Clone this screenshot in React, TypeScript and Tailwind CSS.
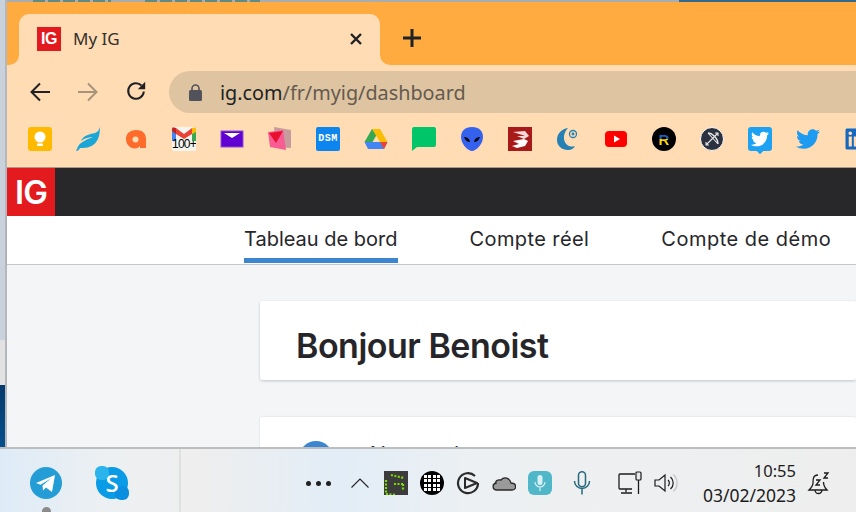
import React from 'react';
import { FaTwitter, FaLinkedin } from 'react-icons/fa';

const Keep = () => (
    <div className="w-6 h-6 rounded-[3px] bg-[#ffba00] flex items-center justify-center">
        <svg width="16" height="18" viewBox="0 0 16 18">
            <circle cx="8" cy="7" r="5.5" fill="#fff" />
            <rect x="5" y="13.5" width="6" height="2.5" rx="0.5" fill="#fff" />
        </svg>
    </div>
);

const Leaf = () => (
    <svg width="24" height="24" viewBox="0 0 24 24">
        <path d="M24 0c-1 3-2 5-5 6-6 1-12 3-14 8 4-3 8-4 12-4-3 1-8 3-12 6-3 2-4 6-5 8 2 0 3-1 4-3 4 0 9 0 13-3 5-3 7-10 7-18z" fill="#1ba6d8" />
    </svg>
);

const OrangeA = () => (
    <svg width="24" height="24" viewBox="0 0 24 24">
        <path fillRule="evenodd" d="M12 3c6 0 10 3 10 9v9h-6v-2c-1 1.500-3 2.500-5 2.500-5 0-9-4-9-9.500s4-9 10-9zm-.500 6.500a3 3 0 1 0 0 6 3 3 0 0 0 0-6z" fill="#ff6b2b" />
    </svg>
);

const Gmail = () => (
    <div className="w-6 h-6 relative bg-[#f4f5ef] rounded-[2px] overflow-hidden">
        <svg className="absolute left-0 top-0" width="24" height="14" viewBox="0 0 24 14">
            <path d="M0 4 L4 1 V14 H0z" fill="#4285f4" />
            <path d="M24 4 L20 1 V14 H24z" fill="#34a853" />
            <path d="M4 1 L12 7 L20 1 V7 L12 12 L4 7z" fill="#ea4335" />
            <path d="M20 1 L24 0 V5 L20 7z" fill="#fbbc04" />
            <path d="M0 0 L4 1 V7 L0 4z" fill="#c5221f" />
        </svg>
        <span className="absolute left-0 right-0 top-[10px] text-center text-[12px] leading-[14px] tracking-[-0.8px] text-black font-['Liberation_Sans',sans-serif]">100+</span>
    </div>
);

const YahooMail = () => (
    <svg width="24" height="24" viewBox="0 0 24 24">
        <rect x="0" y="4" width="22" height="16" transform="translate(1 0)" fill="#6001d2" stroke="#8a4fd8" strokeWidth="1" />
        <path d="M4 6 H20 L12 11z" fill="#fff" />
    </svg>
);

const Pages = () => (
    <svg width="24" height="24" viewBox="0 0 24 24">
        <path d="M6 0 L23 3 V21 L8 20z" fill="#c79c9c" />
        <path d="M0 5 L15 3 L18 23 L2 20z" fill="#f75d93" />
        <path d="M1 6 L15 4 L8 16z" fill="#e8102e" />
    </svg>
);

const Dsm = () => (
    <div className="w-6 h-6 rounded-[2px] bg-[#0d85ee] flex items-center justify-center">
        <span className="text-[10px] leading-none font-bold text-white tracking-[0.5px] font-['Liberation_Mono',monospace]">DSM</span>
    </div>
);

const Drive = () => (
    <svg width="24" height="24" viewBox="0 0 24 22">
        <path d="M8 1 H16 L8.500 14 H0.500z" fill="#34a853" />
        <path d="M8 1 H16 L23.500 14 H16z" fill="#fbbc04" />
        <path d="M0.500 14 H8.500 L23.500 14 L20 21 H4z" fill="#4285f4" />
        <path d="M16 14 H23.500 L20 21z" fill="#ea4335" />
    </svg>
);

const Chat = () => (
    <svg width="24" height="24" viewBox="0 0 24 24">
        <path d="M2 0 H22 a2 2 0 0 1 2 2 V18 a2 2 0 0 1 -2 2 H5 L0 24 V2 a2 2 0 0 1 2 -2z" fill="#00c569" />
    </svg>
);

const Alien = () => (
    <svg width="24" height="24" viewBox="0 0 24 24">
        <path d="M12 0 C5 0 1 4 1 10 C1 17 8 24 12 24 C16 24 23 17 23 10 C23 4 19 0 12 0z" fill="#3561ef" />
        <path d="M4 10 C7 10 10 12 10 15 C7 15 5 13 4 10z" fill="#0a0a14" />
        <path d="M20 10 C17 10 14 12 14 15 C17 15 19 13 20 10z" fill="#0a0a14" />
    </svg>
);

const RedDragon = () => (
    <svg width="24" height="24" viewBox="0 0 24 24">
        <rect width="24" height="24" fill="#a81a1a" />
        <path d="M5 5 L17 4 L21 9 L16 12 L9 9 L17 9z" fill="#f5dada" />
        <path d="M5 14 L16 12 L20 14 L17 19 L9 21 L4 19 L11 17z" fill="#fff" />
    </svg>
);

const Crescent = () => (
    <svg width="24" height="24" viewBox="0 0 24 24">
        <path d="M12 1 C5 2 1 7 1 13 C1 19 6 23 12 23 C16 23 18 21 19 19 C14 21 9 18 8 12 C7.500 8 9 4 12 1z" fill="#2480b5" />
        <circle cx="17" cy="7" r="3.500" fill="none" stroke="#2480b5" strokeWidth="1.300" />
        <circle cx="17" cy="7" r="1.400" fill="#2480b5" />
    </svg>
);

const Youtube = () => (
    <svg width="24" height="24" viewBox="0 0 24 24">
        <rect x="1" y="4" width="22" height="16" rx="4" fill="#f00" />
        <path d="M10 8.500 L16 12 L10 15.500z" fill="#fff" />
    </svg>
);

const RCircle = () => (
    <div className="w-6 h-6 rounded-full bg-black flex items-center justify-center">
        <span className="text-[15px] leading-none font-bold bg-[linear-gradient(#1c5fc4_50%,#ffd400_50%)] bg-clip-text text-transparent font-['Liberation_Sans',sans-serif]">R</span>
    </div>
);

const Bow = () => (
    <svg width="24" height="24" viewBox="0 0 24 24">
        <circle cx="12" cy="12" r="11.500" fill="#2c3140" stroke="#fff" strokeWidth="1" />
        <path d="M8 6 C12 6 18 11 18 17" fill="none" stroke="#e6e6e6" strokeWidth="1.300" />
        <path d="M8 6 L18 17 M6 18 L18 6 M15 6 H18 V9 M6 15 V18 H9" fill="none" stroke="#e6e6e6" strokeWidth="1.100" />
    </svg>
);

const TwitterBubble = () => (
    <div className="w-6 h-6 relative rounded-[3px] bg-[#1da1f2] flex items-center justify-center">
        <FaTwitter className="text-white" size={18} />
        <div className="absolute -bottom-[2px] left-[9px] w-[6px] h-[6px] rotate-45 bg-[#1da1f2]" />
    </div>
);

const TwitterBird = () => <FaTwitter className="text-[#1d9bf0]" size={24} />;

const bookmarks = [Keep, Leaf, OrangeA, Gmail, YahooMail, Pages, Dsm, Drive, Chat, Alien, RedDragon, Crescent, Youtube, RCircle, Bow, TwitterBubble, TwitterBird];

const Tray = ({ className, children }: { className: string; children: React.ReactNode }) => (
    <div className={`flex items-center justify-center shrink-0 ${className}`}>{children}</div>
);

const App = () => {
    return (
        <div className="w-[856px] h-[512px] overflow-hidden flex flex-col bg-white font-['Noto_Sans',sans-serif]">
            <div className="flex-1 min-h-0 flex">
                {/* desktop behind the window */}
                <div className="w-[7px] shrink-0 flex">
                    <div className="w-[5px] flex flex-col">
                        <div className="h-[340px] bg-[#c9d2dc]" />
                        <div className="h-[45px] bg-[#e2e2e2]" />
                        <div className="flex-1 bg-[linear-gradient(#063a6c,#064f8c)]" />
                    </div>
                    <div className="w-[2px] bg-[#b4b8bd]" />
                </div>

                <div className="flex-1 min-w-0 flex flex-col">
                    {/* bits of the window behind, along the top edge */}
                    <div className="h-[2px] flex bg-[#a9adb0]">
                        <div className="ml-[26px] w-[78px] bg-[repeating-linear-gradient(90deg,#5f8a88_0_12px,#a9adb0_12px_15px)]" />
                        <div className="ml-[34px] w-[115px] bg-[repeating-linear-gradient(90deg,#5f8a88_0_12px,#a9adb0_12px_15px)]" />
                        <div className="ml-auto w-[177px] bg-[#35698c]" />
                    </div>

                    {/* tab strip */}
                    <div className="h-[63px] bg-[#ffab40] flex items-end pl-3">
                        <div className="relative w-[361px] h-[51px] bg-[#ffdcb3] rounded-t-[10px] flex items-start pl-[18px] pr-[17px] pt-[13px]">
                            <div className="absolute -left-3 bottom-0 w-3 h-3 bg-[#ffdcb3]">
                                <div className="w-3 h-3 bg-[#ffab40] rounded-br-[10px]" />
                            </div>
                            <div className="absolute -right-3 bottom-0 w-3 h-3 bg-[#ffdcb3]">
                                <div className="w-3 h-3 bg-[#ffab40] rounded-bl-[10px]" />
                            </div>
                            <div className="w-6 h-6 bg-[#e2191f] flex items-center justify-center">
                                <span className="text-white text-[16px] leading-none font-bold tracking-[-0.5px] font-['Liberation_Sans',sans-serif]">IG</span>
                            </div>
                            <span className="ml-3 text-[17px] leading-6 text-[#33302c]">My IG</span>
                            <svg className="ml-auto mt-[5px]" width="14" height="14" viewBox="0 0 14 14">
                                <path d="M2 2 L12 12 M12 2 L2 12" stroke="#202124" strokeWidth="2.400" />
                            </svg>
                        </div>
                        <svg className="ml-[23px] mb-[18px]" width="18" height="18" viewBox="0 0 18 18">
                            <path d="M9 0 V18 M0 9 H18" stroke="#202124" strokeWidth="3" />
                        </svg>
                    </div>

                    {/* toolbar */}
                    <div className="h-[48px] bg-[#ffdcb3] flex items-start pt-[6px]">
                        <div className="w-[162px] h-[42px] shrink-0 flex items-center pl-[23px]">
                            <svg width="20" height="20" viewBox="0 0 20 20">
                                <path d="M20 10 H1.500 M10 1.500 L1.500 10 L10 18.500" fill="none" stroke="#202124" strokeWidth="2" />
                            </svg>
                            <svg className="ml-[28px]" width="20" height="20" viewBox="0 0 20 20">
                                <path d="M0 10 H18.500 M10 1.500 L18.500 10 L10 18.500" fill="none" stroke="#a6937b" strokeWidth="2" />
                            </svg>
                            <svg className="ml-[27px] -mt-[2px]" width="22" height="22" viewBox="0 0 24 24">
                                <path d="M20.500 12.500 A8.500 8.500 0 1 1 18 6" fill="none" stroke="#202124" strokeWidth="2.200" />
                                <path d="M22 2 V10 H14z" fill="#202124" />
                            </svg>
                        </div>
                        <div className="flex-1 h-[42px] bg-[#dec4a0] rounded-l-[21px] flex items-center pl-[20px]">
                            <svg width="13" height="17" viewBox="0 0 13 17">
                                <path d="M3 7 V4.500 a3.500 3.500 0 0 1 7 0 V7" fill="none" stroke="#52525a" strokeWidth="1.600" />
                                <rect y="6" width="13" height="11" rx="1.500" fill="#52525a" />
                            </svg>
                            <span className="ml-[18px] pt-[2px] text-[19.8px] leading-none text-[#202124]">
                                ig.com<span className="text-[#645a50]">/fr/myig/dashboard</span>
                            </span>
                        </div>
                    </div>

                    {/* bookmarks */}
                    <div className="h-[55px] bg-[#ffdcb3] border-b border-[#a89a88] flex items-start gap-6 pl-[21px] pt-[14px]">
                        {bookmarks.map((Icon, i) => (
                            <div key={i} className="w-6 h-6 shrink-0">
                                <Icon />
                            </div>
                        ))}
                        <FaLinkedin className="shrink-0 text-[#1769c0]" size={24} />
                    </div>

                    {/* site header */}
                    <div className="h-12 bg-[#28282a] shrink-0">
                        <div className="w-12 h-12 bg-[#e31b1e] flex items-center justify-center">
                            <span className="text-white text-[33px] leading-none font-semibold tracking-[-1px] font-['Inter',sans-serif]">IG</span>
                        </div>
                    </div>

                    {/* nav */}
                    <div className="h-[49px] shrink-0 bg-white border-b border-[#c4c6ca] shadow-[0_1px_2px_rgba(0,0,0,0.12)] flex items-start pl-[237px] gap-[72px] text-[20px] leading-[47px] text-[#26262a] font-['Inter',sans-serif] whitespace-nowrap">
                        <span className="h-[47px] border-b-[5px] border-[#3b86cf]">Tableau de bord</span>
                        <span className="tracking-[0.4px]">Compte réel</span>
                        <span className="tracking-[0.5px]">Compte de démo</span>
                    </div>

                    {/* content */}
                    <div className="flex-1 min-h-0 overflow-hidden bg-[#f4f5f7] pl-[253px] pt-[36px] flex flex-col gap-[37px]">
                        <div className="h-[79px] shrink-0 bg-white rounded-[2px] shadow-[0_1px_3px_rgba(0,0,0,0.2)] pl-[36px] pt-[10px] flex items-center">
                            <h1 className="text-[34px] leading-none font-semibold text-[#26262a] tracking-[-0.5px] font-['Inter',sans-serif]">Bonjour Benoist</h1>
                        </div>
                        <div className="h-[120px] shrink-0 bg-white rounded-[2px] shadow-[0_0_2px_rgba(0,0,0,0.15)] pl-[39px] pt-[24px] flex gap-[33px]">
                            <div className="w-[34px] h-[34px] rounded-full bg-[#3b86cf]" />
                            <span className="pt-[3px] text-[20px] leading-none tracking-[0.9px] text-[#26262a] font-['Inter',sans-serif]">Ajouter du compte</span>
                        </div>
                    </div>
                </div>
            </div>

            {/* windows taskbar */}
            <div className="h-[65px] shrink-0 border-t-2 border-[#bcbdbe] bg-[linear-gradient(90deg,#deebf7_0px,#edf0f2_110px,#eeeeee_200px,#e2edf7_340px,#edf0f2_480px,#eeeeee_856px)] flex items-stretch relative">
                <div className="w-[181px] shrink-0 border-r-2 border-[#e0e0e0] flex items-center pl-[30px] gap-[34px] pt-[5px]">
                    <svg width="32" height="32" viewBox="0 0 32 32">
                        <circle cx="16" cy="16" r="16" fill="#249dd6" />
                        <path d="M6 16 L25 8 L22 25 L16 20.500 L13 23.500 L12.500 18.500 L21 11.500 L10.500 17.800z" fill="#fff" />
                    </svg>
                    {/* skype blob, the S stays a real letter */}
                    <div className="relative w-8 h-8 rounded-full bg-[#0a9be6] flex items-center justify-center">
                        <div className="absolute -left-[1px] -top-[1px] w-[14px] h-[14px] rounded-[6px] bg-[#2bb3ec]" />
                        <div className="absolute -right-[1px] -bottom-[1px] w-[14px] h-[14px] rounded-[6px] bg-[#0a8fe0]" />
                        <span className="relative text-white text-[24px] leading-none font-semibold font-['Open_Sans',sans-serif]">S</span>
                    </div>
                </div>
                <div className="absolute left-[42px] bottom-[0px] w-[9px] h-[5px] rounded-t-full bg-[#8a8a8a]" />

                <div className="flex-1 flex items-center pl-[125px] pt-[5px]">
                    <Tray className="w-[24px] gap-[5px]">
                        <span className="w-[5px] h-[5px] shrink-0 rounded-full bg-[#202020]" />
                        <span className="w-[5px] h-[5px] shrink-0 rounded-full bg-[#202020]" />
                        <span className="w-[5px] h-[5px] shrink-0 rounded-full bg-[#202020]" />
                    </Tray>
                    <Tray className="ml-[21px] w-[18px]">
                        <svg width="18" height="10" viewBox="0 0 18 10">
                            <path d="M0.500 9.500 L9 1 L17.500 9.500" fill="none" stroke="#202020" strokeWidth="1.100" />
                        </svg>
                    </Tray>
                    <Tray className="ml-[15px] w-6 h-6 bg-[#3c3c3c]">
                        <svg width="24" height="24" viewBox="0 0 24 24">
                            <path d="M7 4 L20 7 M2 9 L2 23 M2 23 L12 24 M10 13 L19 13 M19 13 L19 20" fill="none" stroke="#7ddc00" strokeWidth="2.200" strokeDasharray="2 1.500" />
                        </svg>
                    </Tray>
                    <Tray className="ml-3 w-6 h-6 rounded-full bg-black">
                        <div className="grid grid-cols-4 gap-[1.500px]">
                            {Array.from({ length: 16 }).map((_, i) => (
                                <span key={i} className="w-[3px] h-[3px] bg-white" />
                            ))}
                        </div>
                    </Tray>
                    <Tray className="ml-3 w-6 h-6">
                        <svg width="24" height="24" viewBox="0 0 24 24">
                            <path d="M22 12 A10 10 0 1 1 19 5" fill="none" stroke="#2a2a2a" strokeWidth="2.200" />
                            <path d="M9 7 L21 12 L9 17z" fill="none" stroke="#2a2a2a" strokeWidth="2" strokeLinejoin="round" />
                        </svg>
                    </Tray>
                    <Tray className="ml-3 w-6 h-6">
                        <svg width="24" height="16" viewBox="0 0 24 16">
                            <path d="M5 15 H20 C25 15 25 8 19 8 C18 3 12 1 9 5 C5 4 3 7 4 8 C0 9 0 15 5 15z" fill="#9a9a9a" stroke="#2a2a2a" strokeWidth="1.300" />
                        </svg>
                    </Tray>
                    <Tray className="ml-3 w-6 h-6 rounded-[6px] bg-[#4fb7c7]">
                        <svg width="14" height="18" viewBox="0 0 14 18">
                            <rect x="4.500" y="1" width="5" height="10" rx="2.500" fill="#d9f0f4" />
                            <path d="M2 8 a5 5 0 0 0 10 0 M7 13 V17" fill="none" stroke="#d9f0f4" strokeWidth="1.200" />
                        </svg>
                    </Tray>
                    <Tray className="ml-[18px] w-6 h-6">
                        <svg width="18" height="24" viewBox="0 0 18 24">
                            <rect x="5.500" y="0.800" width="7" height="15" rx="3.500" fill="none" stroke="#26697c" strokeWidth="1.500" />
                            <path d="M1.500 10 a7.500 7.500 0 0 0 15 0 M9 17.500 V23.500" fill="none" stroke="#26697c" strokeWidth="1.500" />
                        </svg>
                    </Tray>
                    <Tray className="ml-[24px] w-6 h-6">
                        <svg width="24" height="24" viewBox="0 0 24 24">
                            <path d="M17 3 H2 A1 1 0 0 0 1 4 V17 A1 1 0 0 0 2 18 H14 M8 18 V21 M3 22 H14" fill="none" stroke="#1c1c1c" strokeWidth="1.300" />
                            <rect x="18" y="1" width="5" height="8" rx="1" fill="#e8e8e8" stroke="#1c1c1c" strokeWidth="1.200" />
                            <path d="M20.500 9 V23" stroke="#1c1c1c" strokeWidth="1.300" />
                        </svg>
                    </Tray>
                    <Tray className="ml-3 w-6 h-6">
                        <svg width="24" height="20" viewBox="0 0 24 20">
                            <path d="M1 7 H5 L11 2 V18 L5 13 H1z" fill="none" stroke="#1c1c1c" strokeWidth="1.200" />
                            <path d="M14 7 a4 4 0 0 1 0 6 M16.500 4 a8 8 0 0 1 0 12" fill="none" stroke="#1c1c1c" strokeWidth="1.200" />
                            <path d="M19.500 1.500 a12 12 0 0 1 0 17" fill="none" stroke="#c4c4c4" strokeWidth="1.200" />
                        </svg>
                    </Tray>
                    <div className="ml-[18px] w-[100px] shrink-0 text-right text-[17.5px] leading-[24px] text-[#1c1c1c] whitespace-nowrap">
                        <div className="text-[16.5px]">10:55</div>
                        <div>03/02/2023</div>
                    </div>
                    <Tray className="ml-[11px] w-6 h-6">
                        <svg width="24" height="24" viewBox="0 0 24 24">
                            <path d="M11 4 C6 4 6 8 6 12 C6 15 4 17 2 19 H20 C18 17 16.500 15 16.500 11 M8 19 a3.500 3.500 0 0 0 7 0" fill="none" stroke="#1c1c1c" strokeWidth="1.300" />
                            <path d="M9 9 H13 L9 14 H13 M17 2 H21 L17 7 H21" fill="none" stroke="#1c1c1c" strokeWidth="1.300" />
                        </svg>
                    </Tray>
                </div>
            </div>
        </div>
    );
};

export default App;
